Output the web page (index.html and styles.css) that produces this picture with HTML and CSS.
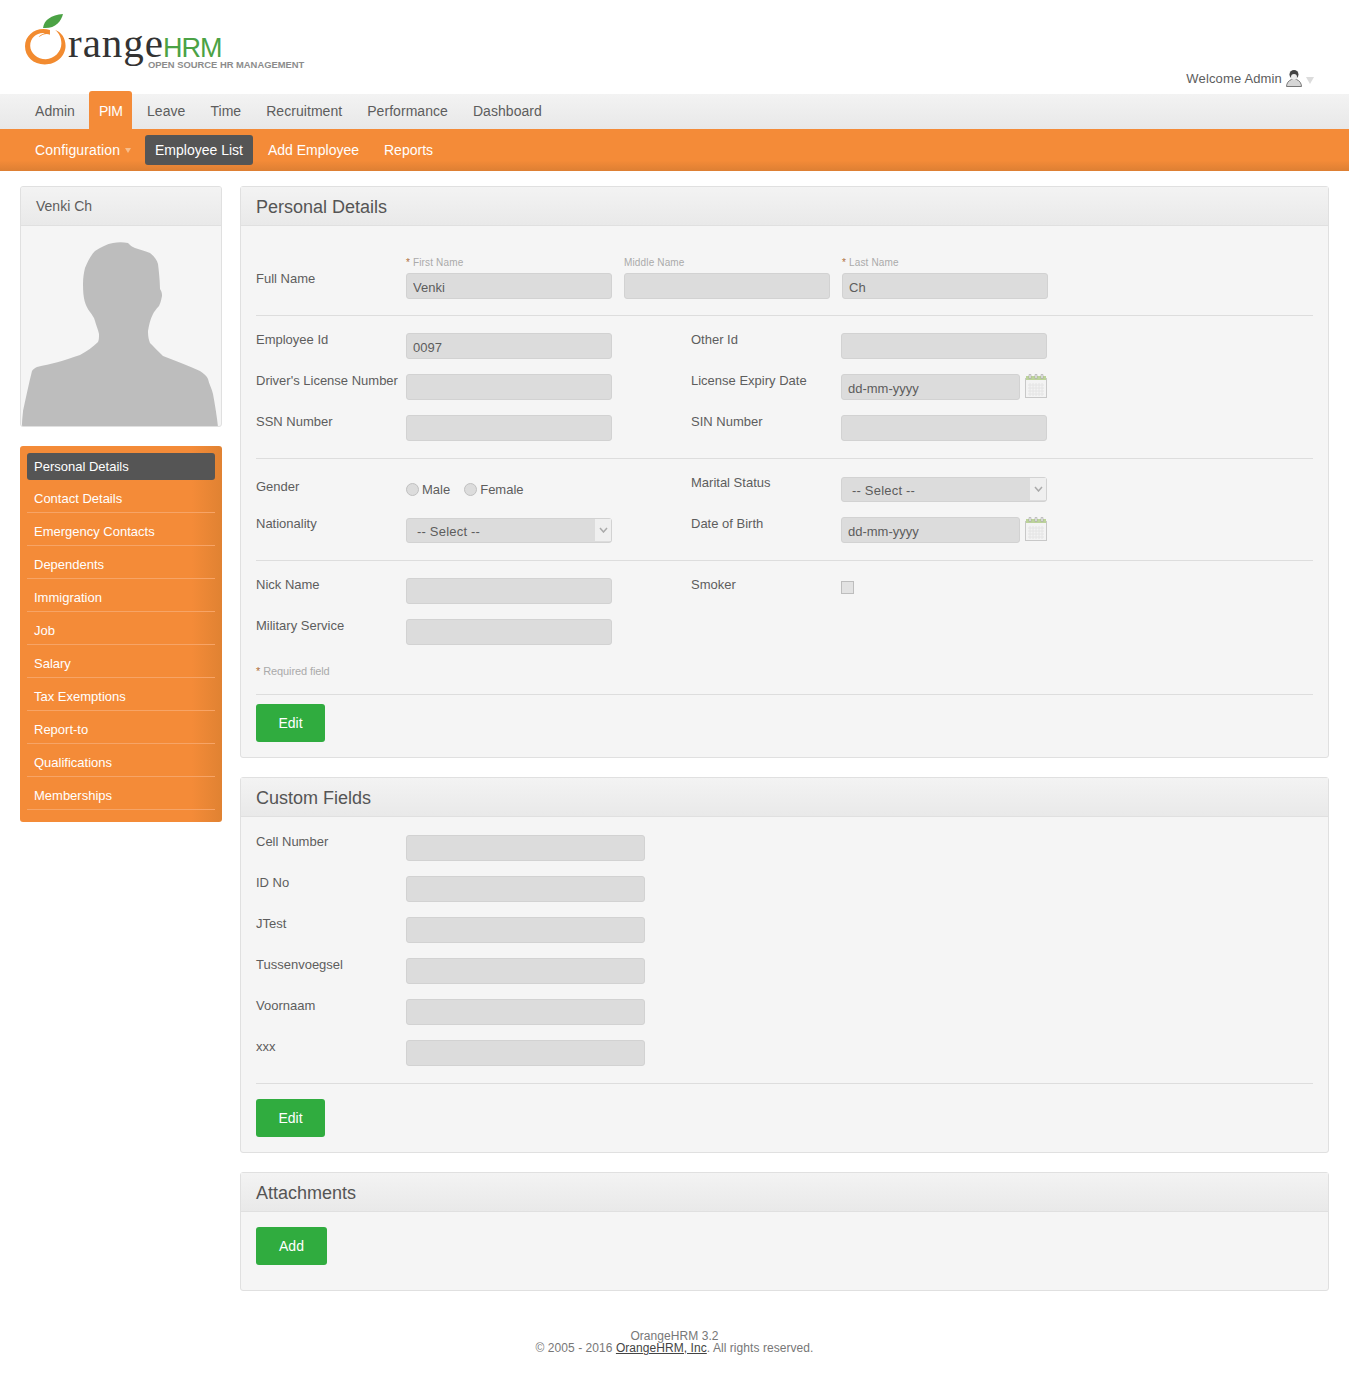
FILE: index.html
```html
<!DOCTYPE html>
<html lang="en">
<head>
    <meta charset="UTF-8">
    <meta name="viewport" content="width=device-width, initial-scale=1.0">
    <title>OrangeHRM</title>
    <link rel="stylesheet" href="styles.css">
</head>
<body>
    <header class="branding">
        <svg class="logo" width="290" height="62" viewBox="0 0 290 62">
            <path transform="translate(0,1) scale(1.04)" d="M24 14.500c-12-4-24 4-24 15.500c0 10 8 17.500 19 17.500c11 0 20-8 20-18c0-7-4-13-10-15c4 3 6 8 6 13c0 8-7 15-15 15c-8 0-15-6-15-13c0-8 7-13 14-12c-3 1-5 2-6 4c4-3 8-4 11-2.500z" fill="#f28b30"/>
            <path d="M18 14c1-8 8-13 20-14c-2 8-8 15-20 14z" fill="#4ba245"/>
            <text x="43" y="43" class="logo-range">range</text>
            <text x="138" y="43" class="logo-hrm">HRM</text>
            <text x="123" y="54" class="logo-tag">OPEN SOURCE HR MANAGEMENT</text>
        </svg>
        <div class="welcome">
            <span>Welcome Admin</span>
            <svg width="16" height="18" viewBox="0 0 16 18">
                <path d="M0.500 17.500c0-3 2-6 5-7h5c3 1 5 4 5 7z" fill="#d6d6d6" stroke="#777"/>
                <circle cx="8" cy="5.500" r="4.500" fill="#444"/>
                <ellipse cx="8" cy="8" rx="3" ry="3" fill="#eee"/>
            </svg>
            <span class="caret caret-grey"></span>
        </div>
    </header>

    <nav class="main-menu">
        <a href="#">Admin</a>
        <a href="#" class="current">PIM</a>
        <a href="#">Leave</a>
        <a href="#">Time</a>
        <a href="#">Recruitment</a>
        <a href="#">Performance</a>
        <a href="#">Dashboard</a>
    </nav>
    <nav class="sub-menu">
        <a href="#">Configuration<span class="caret caret-orange"></span></a>
        <a href="#" class="current">Employee List</a>
        <a href="#">Add Employee</a>
        <a href="#">Reports</a>
    </nav>

    <div class="content">
        <aside class="sidebar">
            <div class="profile">
                <h2>Venki Ch</h2>
                <svg class="silhouette" width="200" height="201" viewBox="0 -1 200 201">
                    <path d="M1 200C1 192 2 186 2 184C5 170 8 156 11 144C12 142 14 141 16 140C30 137 42 134 59 128C66 124 72 120 77 115C78 113 78 110 78 107C77 102 75 98 74 94C73 90 71 88 69 85C64 78 62 72 62 57C62 50 63 45 64 41C67 34 70 28 74 24C80 20 86 17 92 16C97 15 102 15 107 16C109 18 111 20 114 21C119 23 125 24 129 26C133 29 136 33 137 37C138 45 139 55 139 62C141 65 141 67 141 69C140 74 139 77 138 79C135 82 133 85 132 87C129 93 128 98 127 104C127 110 128 113 129 116C133 120 137 124 142 129C155 134 168 139 179 144C183 147 186 149 187 152C188 157 191 162 192 167C194 178 196 190 197 200Z" fill="#bdbdbd"/>
                </svg>
            </div>
            <ul class="side-menu">
                <li class="current"><a href="#">Personal Details</a></li>
                <li><a href="#">Contact Details</a></li>
                <li><a href="#">Emergency Contacts</a></li>
                <li><a href="#">Dependents</a></li>
                <li><a href="#">Immigration</a></li>
                <li><a href="#">Job</a></li>
                <li><a href="#">Salary</a></li>
                <li><a href="#">Tax Exemptions</a></li>
                <li><a href="#">Report-to</a></li>
                <li><a href="#">Qualifications</a></li>
                <li><a href="#">Memberships</a></li>
            </ul>
        </aside>

        <main class="main">
            <section class="panel">
                <h1>Personal Details</h1>
                <div class="panel-body">
                    <div class="name-section">
                        <label class="field-label name-label">Full Name</label>
                        <div class="name-field">
                            <small><b>*</b> First Name</small>
                            <input type="text" value="Venki" disabled>
                        </div>
                        <div class="name-field">
                            <small>Middle Name</small>
                            <input type="text" disabled>
                        </div>
                        <div class="name-field">
                            <small><b>*</b> Last Name</small>
                            <input type="text" value="Ch" disabled>
                        </div>
                    </div>

                    <div class="form-section">
                        <div class="field">
                            <label class="field-label">Employee Id</label>
                            <input type="text" value="0097" disabled>
                        </div>
                        <div class="field">
                            <label class="field-label">Other Id</label>
                            <input type="text" disabled>
                        </div>
                        <div class="field">
                            <label class="field-label">Driver's License Number</label>
                            <input type="text" disabled>
                        </div>
                        <div class="field">
                            <label class="field-label">License Expiry Date</label>
                            <div class="date-field">
                                <input type="text" value="dd-mm-yyyy" disabled>
                                <svg class="calendar" width="22" height="24" viewBox="0 0 22 24">
                                    <rect x="0.500" y="4.500" width="21" height="19" fill="#f3f3f3" stroke="#c8c8c8"/>
                                    <rect x="1" y="2" width="20" height="4" fill="#bcd39a"/>
                                    <path d="M4 0.500h2v4h-2zM10 0.500h2v4h-2zM16 0.500h2v4h-2z" fill="#e8e8e8" stroke="#9a9a9a" stroke-width="0.500"/>
                                    <path d="M3 11h16M3 14h16M3 17h16M3 20h16M5 9v13M8 9v13M11 9v13M14 9v13M17 9v13" stroke="#e4e4e4"/>
                                </svg>
                            </div>
                        </div>
                        <div class="field">
                            <label class="field-label">SSN Number</label>
                            <input type="text" disabled>
                        </div>
                        <div class="field">
                            <label class="field-label">SIN Number</label>
                            <input type="text" disabled>
                        </div>
                    </div>

                    <div class="form-section">
                        <div class="field">
                            <label class="field-label gender-label">Gender</label>
                            <div class="radios">
                                <input type="radio" disabled><span>Male</span>
                                <input type="radio" disabled><span>Female</span>
                            </div>
                        </div>
                        <div class="field">
                            <label class="field-label">Marital Status</label>
                            <div class="select-wrap">
                                <select disabled><option>-- Select --</option></select>
                                <span class="select-arrow"><svg width="9" height="6" viewBox="0 0 9 6"><path d="M1 1l3.500 4l3.500-4" fill="none" stroke="#aaa" stroke-width="1.500"/></svg></span>
                            </div>
                        </div>
                        <div class="field">
                            <label class="field-label">Nationality</label>
                            <div class="select-wrap">
                                <select disabled><option>-- Select --</option></select>
                                <span class="select-arrow"><svg width="9" height="6" viewBox="0 0 9 6"><path d="M1 1l3.500 4l3.500-4" fill="none" stroke="#aaa" stroke-width="1.500"/></svg></span>
                            </div>
                        </div>
                        <div class="field">
                            <label class="field-label">Date of Birth</label>
                            <div class="date-field">
                                <input type="text" value="dd-mm-yyyy" disabled>
                                <svg class="calendar" width="22" height="24" viewBox="0 0 22 24">
                                    <rect x="0.500" y="4.500" width="21" height="19" fill="#f3f3f3" stroke="#c8c8c8"/>
                                    <rect x="1" y="2" width="20" height="4" fill="#bcd39a"/>
                                    <path d="M4 0.500h2v4h-2zM10 0.500h2v4h-2zM16 0.500h2v4h-2z" fill="#e8e8e8" stroke="#9a9a9a" stroke-width="0.500"/>
                                    <path d="M3 11h16M3 14h16M3 17h16M3 20h16M5 9v13M8 9v13M11 9v13M14 9v13M17 9v13" stroke="#e4e4e4"/>
                                </svg>
                            </div>
                        </div>
                    </div>

                    <div class="form-section last-section">
                        <div class="field">
                            <label class="field-label">Nick Name</label>
                            <input type="text" disabled>
                        </div>
                        <div class="field">
                            <label class="field-label">Smoker</label>
                            <input type="checkbox" class="smoker" disabled>
                        </div>
                        <div class="field">
                            <label class="field-label">Military Service</label>
                            <input type="text" disabled>
                        </div>
                    </div>
                    <p class="required"><b>*</b> Required field</p>
                    <div class="actions">
                        <button type="button">Edit</button>
                    </div>
                </div>
            </section>

            <section class="panel">
                <h1>Custom Fields</h1>
                <div class="panel-body">
                    <div class="custom-fields">
                        <div class="field wide"><label class="field-label">Cell Number</label><input type="text" disabled></div>
                        <div class="field wide"><label class="field-label">ID No</label><input type="text" disabled></div>
                        <div class="field wide"><label class="field-label">JTest</label><input type="text" disabled></div>
                        <div class="field wide"><label class="field-label">Tussenvoegsel</label><input type="text" disabled></div>
                        <div class="field wide"><label class="field-label">Voornaam</label><input type="text" disabled></div>
                        <div class="field wide"><label class="field-label">xxx</label><input type="text" disabled></div>
                    </div>
                    <div class="actions custom-actions">
                        <button type="button">Edit</button>
                    </div>
                </div>
            </section>

            <section class="panel">
                <h1>Attachments</h1>
                <div class="panel-body attachments">
                    <button type="button" class="add-btn">Add</button>
                </div>
            </section>
        </main>
    </div>

    <footer class="footer">
        <div>OrangeHRM 3.2</div>
        <div>&copy; 2005 - 2016 <a href="#">OrangeHRM, Inc</a>. All rights reserved.</div>
    </footer>
</body>
</html>
```

FILE: styles.css
```css
* {
    box-sizing: border-box;
}

body {
    margin: 0;
    font-family: "Liberation Sans", Arial, sans-serif;
    font-size: 13px;
    color: #5d5d5d;
    background-color: #fff;
}

a {
    color: inherit;
    text-decoration: none;
}

/* header */
.branding {
    height: 94px;
    padding: 14px 35px 0 25px;
    display: flex;
    justify-content: space-between;
}

.logo-range {
    font-family: "Liberation Serif", serif;
    font-size: 41px;
    letter-spacing: 1px;
    fill: #333;
}

.logo-hrm {
    font-family: "Liberation Sans", sans-serif;
    font-size: 27px;
    letter-spacing: -1px;
    fill: #4ba245;
}

.logo-tag {
    font-family: "Liberation Sans", sans-serif;
    font-size: 9.400px;
    font-weight: bold;
    fill: #8c8c8c;
}

.welcome {
    display: flex;
    align-items: center;
    gap: 4px;
    height: 18px;
    margin-top: 55px;
    letter-spacing: 0.150px;
}

.caret {
    display: inline-block;
    width: 0;
    height: 0;
    border-left: 4px solid transparent;
    border-right: 4px solid transparent;
}

.caret-grey {
    border-top: 7px solid #dcdcdc;
    margin-top: 4px;
}

.caret-orange {
    border-left-width: 3px;
    border-right-width: 3px;
    border-top: 5px solid #f8bd8b;
    margin-left: 5px;
    vertical-align: 2px;
}

/* menus */
.main-menu {
    height: 35px;
    padding-left: 25px;
    display: flex;
    gap: 5px;
    background: linear-gradient(#f3f3f3, #e8e8e8);
    font-size: 14px;
    letter-spacing: 0.050px;
}

.main-menu a {
    height: 35px;
    line-height: 35px;
    padding: 0 10px;
}

.main-menu a:first-child {
    width: 59px;
}

.main-menu a.current {
    width: 43px;
    height: 38px;
    margin-top: -3px;
    padding-top: 3px;
    border-radius: 3px 3px 0 0;
    background-color: #f48b38;
    color: #fff;
    letter-spacing: -0.500px;
}

.sub-menu {
    height: 42px;
    padding: 6px 0 0 25px;
    display: flex;
    gap: 5px;
    background: linear-gradient(#f48b38 75%, #dd7f33);
    font-size: 14px;
}

.sub-menu a {
    height: 30px;
    line-height: 30px;
    padding: 0 10px;
    border-radius: 3px;
    color: #fff;
}

.sub-menu a:first-child {
    width: 115px;
    padding-right: 0;
    white-space: nowrap;
    letter-spacing: 0.150px;
}

.sub-menu a.current {
    background-color: #555;
}

/* layout */
.content {
    padding: 15px 20px 0;
    display: flex;
    gap: 18px;
    align-items: flex-start;
}

.sidebar {
    width: 202px;
    flex-shrink: 0;
}

.main {
    flex: 1;
}

.profile {
    height: 241px;
    border: 1px solid #e0e0e0;
    border-radius: 3px;
    background-color: #f5f5f5;
    overflow: hidden;
}

.profile h2 {
    height: 39px;
    margin: 0;
    padding-left: 15px;
    line-height: 38px;
    font-size: 14px;
    font-weight: normal;
    background: linear-gradient(#f3f3f3, #e9e9e9);
    border-bottom: 1px solid #e0e0e0;
}

.silhouette {
    display: block;
}

.side-menu {
    list-style: none;
    margin: 19px 0 0;
    padding: 7px 7px 12px;
    border-radius: 3px;
    background: linear-gradient(to right, #f48b38 85%, #e08232);
}

.side-menu li {
    height: 33px;
    padding: 0 7px;
    border-bottom: 1px solid #f7a466;
    line-height: 38px;
    color: #fff;
}

.side-menu li.current {
    height: 27px;
    line-height: 27px;
    margin-bottom: 1px;
    border-bottom: 0;
    border-radius: 3px;
    background-color: #555;
}

.side-menu li.current + li {
    height: 32px;
    line-height: 36px;
}

/* panels */
.panel {
    margin-bottom: 19px;
    border: 1px solid #e0e0e0;
    border-radius: 3px;
    background-color: #f5f5f5;
}

.panel h1 {
    height: 39px;
    margin: 0;
    padding-left: 15px;
    line-height: 40px;
    font-size: 18px;
    font-weight: normal;
    color: #555;
    background: linear-gradient(#f3f3f3, #e9e9e9);
    border-bottom: 1px solid #e0e0e0;
}

.panel-body {
    padding: 0 15px;
}

/* form */
input[type="text"],
select {
    width: 206px;
    height: 26px;
    padding: 2px 6px 0;
    border: 1px solid #d2d2d2;
    border-radius: 3px;
    background-color: #dcdcdc;
    font-family: inherit;
    font-size: 13px;
    color: #5d5d5d;
    opacity: 1;
    -webkit-text-fill-color: #5d5d5d;
}

.field-label {
    width: 150px;
    flex-shrink: 0;
    line-height: 13px;
}

.name-section {
    display: flex;
    height: 90px;
    padding-top: 31px;
    border-bottom: 1px solid #ddd;
}

.name-label {
    padding-top: 15px;
}

.name-field {
    width: 218px;
}

.name-field small {
    display: block;
    height: 16px;
    font-size: 10px;
    line-height: 12px;
    letter-spacing: 0.150px;
    color: #aaa;
}

.name-field b,
.required b {
    font-weight: normal;
    color: #b0703c;
}

.form-section {
    display: grid;
    grid-template-columns: 435px 1fr;
    row-gap: 15px;
    padding: 17px 0;
    border-bottom: 1px solid #ddd;
}

.last-section {
    padding-bottom: 0;
    border-bottom: 0;
}

.field {
    display: flex;
    height: 26px;
}

.date-field {
    display: flex;
    gap: 5px;
    width: 206px;
}

.date-field input[type="text"] {
    width: 179px;
}

.radios {
    display: flex;
    align-items: center;
    height: 26px;
}

.radios input {
    appearance: none;
    width: 13px;
    height: 13px;
    margin: 0 3px 0 0;
    border: 1px solid #c0c0c0;
    border-radius: 50%;
    background-color: #dcdcdc;
}

.radios span {
    margin-right: 14px;
}

.gender-label {
    padding-top: 4px;
}

.select-wrap {
    position: relative;
    width: 206px;
    margin-top: 1px;
}

select {
    display: block;
    appearance: none;
    height: 25px;
    padding: 2px 0 0 10px;
    letter-spacing: 0.200px;
}

.select-arrow {
    position: absolute;
    top: 1px;
    right: 1px;
    bottom: 2px;
    width: 16px;
    display: flex;
    align-items: center;
    justify-content: center;
    background-color: #efefef;
}

.smoker {
    appearance: none;
    width: 13px;
    height: 13px;
    margin: 3px 0 0;
    border: 1px solid #bdbdbd;
    background-color: #e2e2e2;
}

.required {
    margin: 20px 0 0;
    height: 30px;
    border-bottom: 1px solid #ddd;
    font-size: 11px;
    line-height: 12px;
    letter-spacing: -0.100px;
    color: #aaa;
}

.actions {
    padding: 9px 0 15px;
}

button {
    display: block;
    width: 69px;
    height: 38px;
    border: none;
    border-radius: 3px;
    background-color: #30ac3f;
    color: #fff;
    font-family: inherit;
    font-size: 14px;
    cursor: pointer;
}

.add-btn {
    width: 71px;
}

.custom-fields {
    display: flex;
    flex-direction: column;
    gap: 15px;
    padding: 18px 0 17px;
    border-bottom: 1px solid #ddd;
}

.field.wide input[type="text"] {
    width: 239px;
}

.custom-actions {
    padding-top: 15px;
}

.attachments {
    padding-top: 15px;
    padding-bottom: 25px;
}

/* footer */
.footer {
    margin-top: 20px;
    padding-bottom: 30px;
    text-align: center;
    font-size: 12px;
    line-height: 12px;
    letter-spacing: 0.060px;
    color: #777;
}

.footer a {
    color: #444;
    text-decoration: underline;
}
```
